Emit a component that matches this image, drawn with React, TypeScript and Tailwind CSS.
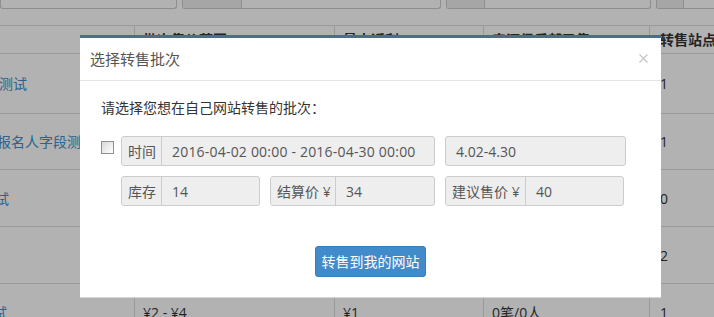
import React from 'react';

const font = "font-['Open_Sans','Noto_Sans_CJK_SC',sans-serif]";

const rows = [
    { name: '活动测试', shift: '-ml-[29px]', h: 'h-[60px]', price: '', rebate: '', sold: '', sites: '1' },
    { name: '报名人字段测试', shift: '-ml-[3px]', h: 'h-[56px]', price: '', rebate: '', sold: '', sites: '1' },
    { name: '测试', shift: '-ml-[19px]', h: 'h-[57px]', price: '', rebate: '', sold: '', sites: '0' },
    { name: '', shift: '', h: 'h-[57px]', price: '', rebate: '', sold: '', sites: '2' },
    { name: '测试', shift: '-ml-[21px]', h: 'h-[57px]', price: '¥2 - ¥4', rebate: '¥1', sold: '0笔/0人', sites: '1' },
];

const Addon: React.FC<{ label: string; w: string }> = ({ label, w }) => (
    <div className={`${w} shrink-0 flex items-center px-[6px] bg-[#eee] border-r border-[#ccc] whitespace-nowrap`}>{label}</div>
);

const App: React.FC = () => {
    return (
        <div className={`relative w-[714px] h-[317px] overflow-hidden bg-white text-[14px] text-[#333] ${font}`}>
            {/* page behind the dialog */}
            <div className="flex h-[9px] gap-[5px]">
                <div className="w-[177px] border border-t-0 border-[#ccc] rounded-b-[3px]" />
                <div className="w-[259px] flex border border-t-0 border-[#ccc] rounded-b-[3px] overflow-hidden">
                    <div className="w-[59px] bg-[#eee] border-r border-[#ccc]" />
                </div>
                <div className="w-[205px] flex border border-t-0 border-[#ccc] rounded-b-[3px] overflow-hidden">
                    <div className="w-[38px] bg-[#eee] border-r border-[#ccc]" />
                </div>
                <div className="flex-1 flex border border-t-0 border-r-0 border-[#ccc] rounded-bl-[3px] overflow-hidden">
                    <div className="w-[27px] bg-[#eee] border-r border-[#ccc]" />
                </div>
            </div>
            <div className="mt-[16px] border-t border-[#ddd]">
                <div className="grid grid-cols-[135px_200px_149px_166px_1fr] h-[28px] border-b border-[#ddd] font-bold">
                    <div className="border-r border-[#ddd]" />
                    <div className="border-r border-[#ddd] pl-[8px] flex items-center">批次售价范围</div>
                    <div className="border-r border-[#ddd] pl-[8px] flex items-center">最大返利</div>
                    <div className="border-r border-[#ddd] pl-[8px] flex items-center whitespace-nowrap">来源俱乐部已售</div>
                    <div className="pl-[10px] flex items-center whitespace-nowrap overflow-hidden">转售站点数</div>
                </div>
                {rows.map((r, i) => (
                    <div key={i} className={`grid grid-cols-[135px_200px_149px_166px_1fr] ${r.h} border-b border-[#ddd]`}>
                        <div className="border-r border-[#ddd] flex items-center overflow-hidden">
                            <span className={`${r.shift} text-[#428bca] whitespace-nowrap`}>{r.name}</span>
                        </div>
                        <div className="border-r border-[#ddd] pl-[8px] flex items-center">{r.price}</div>
                        <div className="border-r border-[#ddd] pl-[8px] flex items-center">{r.rebate}</div>
                        <div className="border-r border-[#ddd] pl-[8px] flex items-center">{r.sold}</div>
                        <div className="pl-[10px] flex items-center">{r.sites}</div>
                    </div>
                ))}
            </div>

            {/* backdrop */}
            <div className="absolute inset-0 bg-black/30" />

            {/* dialog */}
            <div className="absolute left-[80px] top-[35px] w-[581px] h-[263px] bg-white border-t-[3px] border-[#4e6d8d] border-b border-b-[#d6d6d6] text-[#555]">
                <div className="h-[43px] border-b border-[#e5e5e5] flex items-center justify-between pl-[10px] pr-[13px]">
                    <h4 className="text-[15px] text-[#555]">选择转售批次</h4>
                    <svg width="9" height="9" viewBox="0 0 9 9" className="mb-[2px]">
                        <path d="M0.5 0.5 L8.5 8.5 M8.5 0.5 L0.5 8.5" stroke="#c4c4c4" strokeWidth="1.2" />
                    </svg>
                </div>
                <div className="pl-[21px] pt-[17px]">
                    <p className="leading-[20px] text-[#333]">请选择您想在自己网站转售的批次：</p>

                    <div className="flex mt-[18px]">
                        <div className="w-[20px] pt-[5px]">
                            <div className="w-[13px] h-[13px] border border-[#8f8f8f] bg-linear-to-br from-[#d8d8d8] to-white" />
                        </div>
                        <div className="flex flex-col gap-[10px]">
                            <div className="flex gap-[10px]">
                                <div className="w-[314px] h-[30px] flex border border-[#ccc] rounded-[3px] overflow-hidden bg-[#eee]">
                                    <Addon label="时间" w="w-[40px]" />
                                    <div className="flex items-center pl-[10px] whitespace-nowrap tracking-[0.2px]">2016-04-02 00:00 - 2016-04-30 00:00</div>
                                </div>
                                <div className="w-[181px] h-[30px] flex items-center pl-[10px] border border-[#ccc] rounded-[3px] bg-[#eee]">4.02-4.30</div>
                            </div>
                            <div className="flex gap-[10px]">
                                <div className="w-[139px] h-[30px] flex border border-[#ccc] rounded-[3px] overflow-hidden bg-[#eee]">
                                    <Addon label="库存" w="w-[40px]" />
                                    <div className="flex items-center pl-[10px]">14</div>
                                </div>
                                <div className="w-[165px] h-[30px] flex border border-[#ccc] rounded-[3px] overflow-hidden bg-[#eee]">
                                    <Addon label="结算价 ¥" w="w-[65px]" />
                                    <div className="flex items-center pl-[10px]">34</div>
                                </div>
                                <div className="w-[179px] h-[30px] flex border border-[#ccc] rounded-[3px] overflow-hidden bg-[#eee]">
                                    <Addon label="建议售价 ¥" w="w-[80px]" />
                                    <div className="flex items-center pl-[10px]">40</div>
                                </div>
                            </div>
                        </div>
                    </div>
                </div>
                <div className="flex justify-center mt-[40px]">
                    <button className="w-[111px] h-[31px] bg-[#428bca] border border-[#357ebd] rounded-[3px] text-white text-[14px]">
                        转售到我的网站
                    </button>
                </div>
            </div>
        </div>
    );
};

export default App;
